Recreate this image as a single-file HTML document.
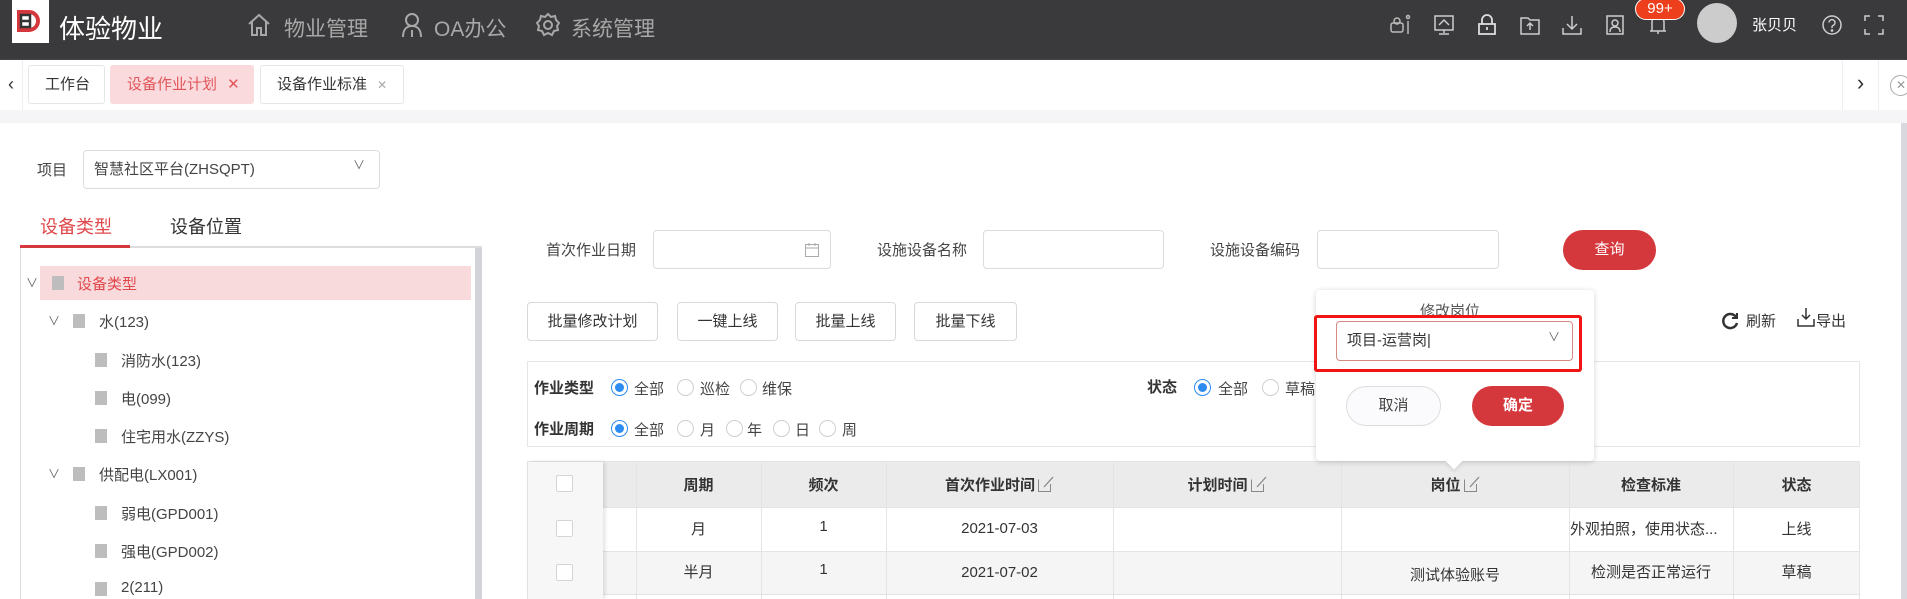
<!DOCTYPE html>
<html><head><meta charset="utf-8"><style>
*{box-sizing:border-box;margin:0;padding:0}
body{width:1907px;height:599px;overflow:hidden;background:#fff;font-family:"Liberation Sans","Noto Sans CJK SC",sans-serif;color:#333;position:relative;font-size:15px}
.a{position:absolute}
.hdr{left:0;top:0;width:1907px;height:60px;background:#3a3a3c}
.nav{color:#a8a8a8;font-size:21px;top:13px}
.ic{top:14px;width:22px;height:22px}
.tab{top:65px;height:39px;border:1px solid #e6e6e6;border-radius:3px;font-size:15px;line-height:37px;padding-left:16px;color:#333;background:#fff}
.inp{border:1px solid #dcdcdc;border-radius:4px;background:#fff}
.btn{top:302px;height:39px;border:1px solid #d9d9d9;border-radius:4px;text-align:center;line-height:37px;font-size:15px;color:#333;background:#fff}
.tr{font-size:15px;color:#444}
.sq{width:12px;height:14px;background:#bdbdbd}
.chev{font-size:12px;color:#666}
.rad{width:17px;height:17px;border:1px solid #cfcfcf;border-radius:50%;background:#fff}
.rad.on{border-color:#2d8cf0}
.rad.on:after{content:"";position:absolute;left:3px;top:3px;width:9px;height:9px;border-radius:50%;background:#2d8cf0}
.lbl{font-size:15px;color:#444}
.cell{text-align:center;font-size:15px;color:#333}
.vl{width:1px;background:#e4e4e4}
.ed{display:inline-block;vertical-align:-3px;margin-left:2px}
</style></head><body>
<div class="a hdr"></div>
<div class="a" style="left:12px;top:0;width:37px;height:43px;background:#fff"></div>
<svg class="a" style="left:16px;top:9px" width="28" height="26" viewBox="0 0 28 26"><path d="M3 3h10a9 9 0 0 1 0 18H3z" fill="none" stroke="#d5383c" stroke-width="4"/><rect x="5" y="6" width="9" height="12" fill="none" stroke="#333" stroke-width="2.5"/><path d="M5 12h8" stroke="#333" stroke-width="2.5"/></svg>
<div class="a" style="left:59px;top:9px;color:#fff;font-size:26px">体验物业</div>
<svg class="a" style="left:246px;top:12px" width="26" height="26" viewBox="0 0 26 26" fill="none" stroke="#a8a8a8" stroke-width="2"><path d="M3 12L13 3l10 9M6 10v13h5v-7h4v7h5V10"/></svg>
<div class="a nav" style="left:284px">物业管理</div>
<svg class="a" style="left:400px;top:12px" width="24" height="26" viewBox="0 0 24 26" fill="none" stroke="#a8a8a8" stroke-width="2"><circle cx="12" cy="8" r="6"/><path d="M3 25c0-8 4-11 9-11s9 3 9 11M12 18v7"/></svg>
<div class="a nav" style="left:434px">OA办公</div>
<svg class="a" style="left:535px;top:12px" width="26" height="26" viewBox="0 0 26 26" fill="none" stroke="#a8a8a8" stroke-width="2"><path d="M13 2l3 3 4-1 1 4 3 3-2 3 1 4-4 1-2 4-4-2-4 2-2-4-4-1 1-4-2-3 3-3 1-4 4 1z"/><circle cx="13" cy="13" r="4"/></svg>
<div class="a nav" style="left:571px">系统管理</div>
<svg class="a ic" style="left:1390px" viewBox="0 0 22 22" fill="none" stroke="#bbb" stroke-width="1.5"><rect x="1" y="9" width="12" height="9" rx="2"/><circle cx="7" cy="7" r="3"/><circle cx="18" cy="3" r="1.5"/><path d="M18 7v13"/></svg>
<svg class="a ic" style="left:1433px" viewBox="0 0 22 22" fill="none" stroke="#ccc" stroke-width="1.5"><rect x="2" y="2" width="18" height="14"/><path d="M6 11l5-5 5 5M11 16v3M6 20h10"/></svg>
<svg class="a ic" style="left:1476px" viewBox="0 0 22 22" fill="none" stroke="#ddd" stroke-width="1.8"><rect x="3" y="10" width="16" height="10"/><path d="M6 10V6a5 5 0 0 1 10 0v4M11 13v3"/></svg>
<svg class="a ic" style="left:1519px" viewBox="0 0 22 22" fill="none" stroke="#ccc" stroke-width="1.5"><path d="M2 4h7l2 2h9v14H2zM11 16v-6M8 12l3-3 3 3"/></svg>
<svg class="a ic" style="left:1561px" viewBox="0 0 22 22" fill="none" stroke="#ccc" stroke-width="1.5"><path d="M11 2v13M6 10l5 5 5-5M2 14v6h18v-6"/></svg>
<svg class="a ic" style="left:1604px" viewBox="0 0 22 22" fill="none" stroke="#ccc" stroke-width="1.5"><rect x="3" y="2" width="16" height="18"/><circle cx="11" cy="9" r="3"/><path d="M6 18c0-4 2-5 5-5s5 1 5 5"/></svg>
<svg class="a ic" style="left:1647px" viewBox="0 0 22 22" fill="none" stroke="#ccc" stroke-width="1.5"><path d="M5 17V8a6 6 0 0 1 12 0v9zM3 17h16M11 17v3"/></svg>
<div class="a" style="left:1635px;top:-2px;width:50px;height:22px;background:#ee3f1c;border:1px solid #fff;border-radius:11px;color:#fff;font-size:15px;text-align:center;line-height:20px">99+</div>
<div class="a" style="left:1697px;top:3px;width:40px;height:40px;border-radius:50%;background:#ccc"></div>
<div class="a" style="left:1752px;top:14px;color:#fff;font-size:15px">张贝贝</div>
<svg class="a ic" style="left:1821px" viewBox="0 0 22 22" fill="none" stroke="#ccc" stroke-width="1.5"><circle cx="11" cy="11" r="9"/><path d="M8 8.5a3 3 0 1 1 4 3c-1 .5-1 1-1 2.5"/><circle cx="11" cy="16.5" r=".6" fill="#ccc"/></svg>
<svg class="a ic" style="left:1863px" viewBox="0 0 22 22" fill="none" stroke="#ccc" stroke-width="1.5"><path d="M2 7V2h5M15 2h5v5M20 15v5h-5M7 20H2v-5"/></svg>

<div class="a" style="left:0;top:60px;width:1907px;height:50px;background:#fff;box-shadow:0 2px 3px #eee"></div>
<div class="a" style="left:0;top:60px;width:23px;height:50px;border-right:1px solid #eee;font-size:18px;line-height:48px;text-align:center;color:#333">‹</div>
<div class="a tab" style="left:28px;width:77px">工作台</div>
<div class="a tab" style="left:110px;width:144px;background:#fadadd;border-color:#fadadd;color:#e0575b">设备作业计划 <span style="margin-left:6px">✕</span></div>
<div class="a tab" style="left:260px;width:144px">设备作业标准 <span style="margin-left:6px;color:#aaa;font-size:12px">✕</span></div>
<div class="a" style="left:1842px;top:60px;width:37px;height:50px;border-left:1px solid #eee;border-right:1px solid #eee;font-size:22px;line-height:46px;text-align:center">›</div>
<div class="a" style="left:1890px;top:75px;width:21px;height:21px;border:1px solid #aaa;border-radius:50%;font-size:12px;line-height:19px;color:#999;padding-left:5px">✕</div>
<div class="a" style="left:0;top:110px;width:1907px;height:13px;background:#f5f5f7"></div>
<div class="a" style="left:1901px;top:123px;width:6px;height:476px;background:#d8d8de"></div>

<div class="a lbl" style="left:37px;top:159px">项目</div>
<div class="a inp" style="left:83px;top:150px;width:297px;height:39px;font-size:15px;line-height:37px;padding-left:10px;color:#444">智慧社区平台(ZHSQPT)<span style="position:absolute;right:14px;top:-4px;font-size:12px;color:#666">∨</span></div>
<div class="a" style="left:40px;top:213px;font-size:18px;color:#e0474b">设备类型</div>
<div class="a" style="left:170px;top:213px;font-size:18px;color:#333">设备位置</div>
<div class="a" style="left:20px;top:246px;width:462px;height:2px;background:#ddd"></div>
<div class="a" style="left:20px;top:245px;width:110px;height:3px;background:#d5383c"></div>
<div class="a" style="left:20px;top:248px;width:1px;height:351px;background:#ddd"></div>
<div class="a" style="left:475px;top:248px;width:7px;height:351px;background:#d3d3da"></div>
<div class="a" style="left:40px;top:266px;width:431px;height:34px;background:#f9dadc"></div>
<div class="a chev" style="left:26px;top:274px">∨</div>
<div class="a sq" style="left:52px;top:276px"></div>
<div class="a tr" style="left:77px;top:273px;color:#e0474b">设备类型</div>
<div class="a chev" style="left:48px;top:312px">∨</div><div class="a sq" style="left:73px;top:314px"></div><div class="a tr" style="left:99px;top:311px">水(123)</div>
<div class="a sq" style="left:95px;top:353px"></div><div class="a tr" style="left:121px;top:350px">消防水(123)</div>
<div class="a sq" style="left:95px;top:391px"></div><div class="a tr" style="left:121px;top:388px">电(099)</div>
<div class="a sq" style="left:95px;top:429px"></div><div class="a tr" style="left:121px;top:426px">住宅用水(ZZYS)</div>
<div class="a chev" style="left:48px;top:465px">∨</div><div class="a sq" style="left:73px;top:467px"></div><div class="a tr" style="left:99px;top:464px">供配电(LX001)</div>
<div class="a sq" style="left:95px;top:506px"></div><div class="a tr" style="left:121px;top:503px">弱电(GPD001)</div>
<div class="a sq" style="left:95px;top:544px"></div><div class="a tr" style="left:121px;top:541px">强电(GPD002)</div>
<div class="a sq" style="left:95px;top:582px"></div><div class="a tr" style="left:121px;top:579px">2(211)</div>

<div class="a lbl" style="left:546px;top:239px">首次作业日期</div>
<div class="a inp" style="left:653px;top:230px;width:178px;height:39px"><svg style="position:absolute;right:10px;top:11px" width="16" height="16" viewBox="0 0 16 16" fill="none" stroke="#aaa"><rect x="1.5" y="2.5" width="13" height="12"/><path d="M1.5 6h13M5 1v3M11 1v3"/></svg></div>
<div class="a lbl" style="left:877px;top:239px">设施设备名称</div>
<div class="a inp" style="left:983px;top:230px;width:181px;height:39px"></div>
<div class="a lbl" style="left:1210px;top:239px">设施设备编码</div>
<div class="a inp" style="left:1317px;top:230px;width:182px;height:39px"></div>
<div class="a" style="left:1563px;top:230px;width:93px;height:40px;border-radius:20px;background:#d5383c;color:#fff;text-align:center;line-height:40px;font-size:15px">查询</div>

<div class="a btn" style="left:527px;width:131px">批量修改计划</div>
<div class="a btn" style="left:677px;width:101px">一键上线</div>
<div class="a btn" style="left:795px;width:101px">批量上线</div>
<div class="a btn" style="left:914px;width:103px">批量下线</div>
<svg class="a" style="left:1720px;top:311px" width="20" height="20" viewBox="0 0 20 20" fill="none" stroke="#333" stroke-width="2.5"><path d="M16 6A7 7 0 1 0 17 12"/><path d="M17 2v5h-5" stroke-width="2"/></svg>
<div class="a lbl" style="left:1746px;top:310px;color:#333">刷新</div>
<svg class="a" style="left:1797px;top:307px" width="18" height="20" viewBox="0 0 18 20" fill="none" stroke="#333" stroke-width="1.5"><path d="M9 1v11M5 8l4 4 4-4M1 12v7h16v-7"/></svg>
<div class="a lbl" style="left:1816px;top:310px;color:#333">导出</div>

<div class="a" style="left:527px;top:361px;width:1333px;height:86px;border:1px solid #e6e6e6"></div>
<div class="a lbl" style="left:534px;top:377px;font-weight:bold;color:#333">作业类型</div>
<div class="a rad on" style="left:611px;top:379px"></div><div class="a lbl" style="left:634px;top:378px">全部</div>
<div class="a rad" style="left:677px;top:379px"></div><div class="a lbl" style="left:700px;top:378px">巡检</div>
<div class="a rad" style="left:740px;top:379px"></div><div class="a lbl" style="left:762px;top:378px">维保</div>
<div class="a lbl" style="left:534px;top:418px;font-weight:bold;color:#333">作业周期</div>
<div class="a rad on" style="left:611px;top:420px"></div><div class="a lbl" style="left:634px;top:419px">全部</div>
<div class="a rad" style="left:677px;top:420px"></div><div class="a lbl" style="left:700px;top:419px">月</div>
<div class="a rad" style="left:726px;top:420px"></div><div class="a lbl" style="left:747px;top:419px">年</div>
<div class="a rad" style="left:773px;top:420px"></div><div class="a lbl" style="left:795px;top:419px">日</div>
<div class="a rad" style="left:819px;top:420px"></div><div class="a lbl" style="left:842px;top:419px">周</div>
<div class="a lbl" style="left:1147px;top:376px;font-weight:bold;color:#333">状态</div>
<div class="a rad on" style="left:1194px;top:379px"></div><div class="a lbl" style="left:1218px;top:378px">全部</div>
<div class="a rad" style="left:1262px;top:379px"></div><div class="a lbl" style="left:1285px;top:378px">草稿</div>

<!-- table -->
<div class="a" style="left:527px;top:461px;width:1333px;height:138px;border:1px solid #e4e4e4;border-bottom:none"></div>
<div class="a" style="left:528px;top:462px;width:1331px;height:45px;background:#ebebeb"></div>
<div class="a" style="left:528px;top:551px;width:1331px;height:43px;background:#f5f5f5"></div>
<div class="a" style="left:528px;top:507px;width:1331px;height:1px;background:#e4e4e4"></div>
<div class="a" style="left:528px;top:551px;width:1331px;height:1px;background:#e4e4e4"></div>
<div class="a" style="left:528px;top:594px;width:1331px;height:1px;background:#e4e4e4"></div>
<div class="a" style="left:528px;top:462px;width:75px;height:137px;background:#f7f7f7;box-shadow:2px 0 4px rgba(0,0,0,.12)"></div>
<div class="a" style="left:556px;top:475px;width:17px;height:17px;border:1px solid #d5d5d5;border-radius:2px;background:#fff"></div>
<div class="a" style="left:556px;top:520px;width:17px;height:17px;border:1px solid #d5d5d5;border-radius:2px;background:#fff"></div>
<div class="a" style="left:556px;top:564px;width:17px;height:17px;border:1px solid #d5d5d5;border-radius:2px;background:#fff"></div>
<div class="a vl" style="left:636px;top:462px;height:137px"></div>
<div class="a vl" style="left:761px;top:462px;height:137px"></div>
<div class="a vl" style="left:886px;top:462px;height:137px"></div>
<div class="a vl" style="left:1113px;top:462px;height:137px"></div>
<div class="a vl" style="left:1341px;top:462px;height:137px"></div>
<div class="a vl" style="left:1569px;top:462px;height:137px"></div>
<div class="a vl" style="left:1733px;top:462px;height:137px"></div>
<div class="a cell" style="left:636px;top:474px;width:125px;font-weight:bold">周期</div>
<div class="a cell" style="left:761px;top:474px;width:125px;font-weight:bold">频次</div>
<div class="a cell" style="left:886px;top:474px;width:227px;font-weight:bold">首次作业时间<svg class="ed" width="17" height="18" viewBox="0 0 17 18" fill="none" stroke="#888"><path d="M1.5 4.5v12h12V9"/><path d="M7 12l9-10" stroke-width="1.3"/></svg></div>
<div class="a cell" style="left:1113px;top:474px;width:228px;font-weight:bold">计划时间<svg class="ed" width="17" height="18" viewBox="0 0 17 18" fill="none" stroke="#888"><path d="M1.5 4.5v12h12V9"/><path d="M7 12l9-10" stroke-width="1.3"/></svg></div>
<div class="a cell" style="left:1341px;top:474px;width:228px;font-weight:bold">岗位<svg class="ed" width="17" height="18" viewBox="0 0 17 18" fill="none" stroke="#888"><path d="M1.5 4.5v12h12V9"/><path d="M7 12l9-10" stroke-width="1.3"/></svg></div>
<div class="a cell" style="left:1569px;top:474px;width:164px;font-weight:bold">检查标准</div>
<div class="a cell" style="left:1733px;top:474px;width:127px;font-weight:bold">状态</div>
<div class="a cell" style="left:636px;top:518px;width:125px">月</div>
<div class="a cell" style="left:761px;top:518px;width:125px">1</div>
<div class="a cell" style="left:886px;top:520px;width:227px">2021-07-03</div>
<div class="a cell" style="left:1569px;top:518px;width:164px;text-align:left;padding-left:1px">外观拍照，使用状态...</div>
<div class="a cell" style="left:1733px;top:518px;width:127px">上线</div>
<div class="a cell" style="left:636px;top:561px;width:125px">半月</div>
<div class="a cell" style="left:761px;top:561px;width:125px">1</div>
<div class="a cell" style="left:886px;top:564px;width:227px">2021-07-02</div>
<div class="a cell" style="left:1341px;top:564px;width:228px">测试体验账号</div>
<div class="a cell" style="left:1569px;top:561px;width:164px">检测是否正常运行</div>
<div class="a cell" style="left:1733px;top:561px;width:127px">草稿</div>

<!-- popover -->
<div class="a" style="left:1316px;top:290px;width:278px;height:171px;background:#fff;border-radius:4px;box-shadow:0 1px 6px rgba(0,0,0,.18)"></div>
<div class="a" style="left:1448px;top:455px;width:12px;height:12px;background:#fff;transform:rotate(45deg);box-shadow:2px 2px 3px rgba(0,0,0,.08)"></div>
<div class="a" style="left:1420px;top:300px;font-size:15px;color:#555">修改岗位</div>
<div class="a" style="left:1314px;top:315px;width:268px;height:57px;border:3px solid #f01414;border-radius:3px"></div>
<div class="a" style="left:1336px;top:321px;width:237px;height:40px;border:1px solid #d88a82;border-radius:4px;font-size:15px;line-height:38px;padding-left:10px;color:#333">项目-运营岗|<span style="position:absolute;right:12px;top:-4px;font-size:12px;color:#666">∨</span></div>
<div class="a" style="left:1346px;top:386px;width:95px;height:40px;border:1px solid #ddd;border-radius:20px;background:#fbfbfd;text-align:center;line-height:38px;font-size:15px;color:#444">取消</div>
<div class="a" style="left:1472px;top:386px;width:92px;height:40px;border-radius:20px;background:#d5383c;text-align:center;line-height:40px;font-size:15px;color:#fff;font-weight:bold">确定</div>
</body></html>
